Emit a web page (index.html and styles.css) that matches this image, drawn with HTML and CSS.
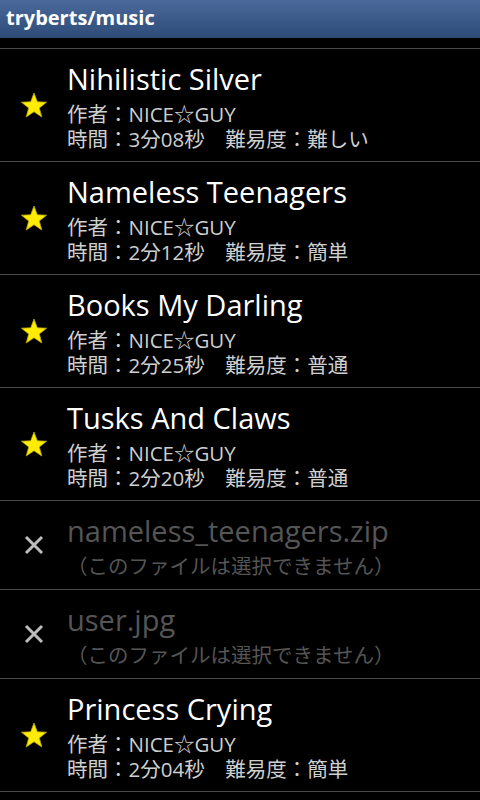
FILE: index.html
```html
<!DOCTYPE html>
<html lang="ja">
<head>
    <meta charset="UTF-8">
    <meta name="viewport" content="width=device-width, initial-scale=1.0">
    <title>tryberts/music</title>
    <link rel="stylesheet" href="styles.css">
</head>
<body>

    <div id="titlebar">tryberts/music</div>

    <div id="list">
        <div class="row">
            <div class="icon">
                <svg width="28" height="27" viewBox="0 0 28 27"><polygon class="star" points="14,1 17.3,9.8 26.6,10.2 19.3,16 21.8,25 14,19.8 6.2,25 8.7,16 1.4,10.2 10.7,9.8"/></svg>
            </div>
            <div class="text">
                <div class="name">Nihilistic Silver</div>
                <div class="info">作者：NICE☆GUY</div>
                <div class="info">時間：3分08秒　難易度：難しい</div>
            </div>
        </div>
        <div class="row">
            <div class="icon">
                <svg width="28" height="27" viewBox="0 0 28 27"><polygon class="star" points="14,1 17.3,9.8 26.6,10.2 19.3,16 21.8,25 14,19.8 6.2,25 8.7,16 1.4,10.2 10.7,9.8"/></svg>
            </div>
            <div class="text">
                <div class="name">Nameless Teenagers</div>
                <div class="info">作者：NICE☆GUY</div>
                <div class="info">時間：2分12秒　難易度：簡単</div>
            </div>
        </div>
        <div class="row">
            <div class="icon">
                <svg width="28" height="27" viewBox="0 0 28 27"><polygon class="star" points="14,1 17.3,9.8 26.6,10.2 19.3,16 21.8,25 14,19.8 6.2,25 8.7,16 1.4,10.2 10.7,9.8"/></svg>
            </div>
            <div class="text">
                <div class="name">Books My Darling</div>
                <div class="info">作者：NICE☆GUY</div>
                <div class="info">時間：2分25秒　難易度：普通</div>
            </div>
        </div>
        <div class="row">
            <div class="icon">
                <svg width="28" height="27" viewBox="0 0 28 27"><polygon class="star" points="14,1 17.3,9.8 26.6,10.2 19.3,16 21.8,25 14,19.8 6.2,25 8.7,16 1.4,10.2 10.7,9.8"/></svg>
            </div>
            <div class="text">
                <div class="name">Tusks And Claws</div>
                <div class="info">作者：NICE☆GUY</div>
                <div class="info">時間：2分20秒　難易度：普通</div>
            </div>
        </div>
        <div class="row disabled">
            <div class="icon">
                <svg width="20" height="20" viewBox="0 0 20 20"><path class="cross" d="M2,2 L18,18 M18,2 L2,18"/></svg>
            </div>
            <div class="text">
                <div class="name">nameless_teenagers.zip</div>
                <div class="info">（このファイルは選択できません）</div>
            </div>
        </div>
        <div class="row disabled">
            <div class="icon">
                <svg width="20" height="20" viewBox="0 0 20 20"><path class="cross" d="M2,2 L18,18 M18,2 L2,18"/></svg>
            </div>
            <div class="text">
                <div class="name">user.jpg</div>
                <div class="info">（このファイルは選択できません）</div>
            </div>
        </div>
        <div class="row">
            <div class="icon">
                <svg width="28" height="27" viewBox="0 0 28 27"><polygon class="star" points="14,1 17.3,9.8 26.6,10.2 19.3,16 21.8,25 14,19.8 6.2,25 8.7,16 1.4,10.2 10.7,9.8"/></svg>
            </div>
            <div class="text">
                <div class="name">Princess Crying</div>
                <div class="info">作者：NICE☆GUY</div>
                <div class="info">時間：2分04秒　難易度：簡単</div>
            </div>
        </div>
    </div>

</body>
</html>
```

FILE: styles.css
```css
body {
    margin: 0;
    padding: 0;
    background-color: #000;
    font-family: "Open Sans", "Noto Sans CJK JP", sans-serif;
    overflow: hidden;
}

#titlebar {
    height: 38px;
    line-height: 36px;
    padding-left: 6px;
    background: linear-gradient(#4a6a9c, #2e4b77);
    color: #fff;
    font-size: 20px;
    font-weight: bold;
}

#list {
    margin-top: 10px;
    border-top: 1px solid #4a4a4a;
}

.row {
    display: flex;
    height: 112px;
    border-bottom: 1px solid #4a4a4a;
}

.row.disabled {
    height: 88px;
}

.icon {
    width: 67px;
    flex-shrink: 0;
    display: flex;
    align-items: center;
    justify-content: center;
}

.text {
    padding-top: 7px;
}

.star {
    fill: #ffec00;
    stroke: #b8a800;
    stroke-width: 0.8;
    stroke-linejoin: round;
}

.cross {
    stroke: #bdbdbd;
    stroke-width: 3;
}

.name {
    color: #fff;
    font-size: 29px;
    line-height: 46px;
}

.info {
    color: #cfcfcf;
    font-size: 20.5px;
    line-height: 25px;
}

.disabled .name,
.disabled .info {
    color: #555;
}
```
